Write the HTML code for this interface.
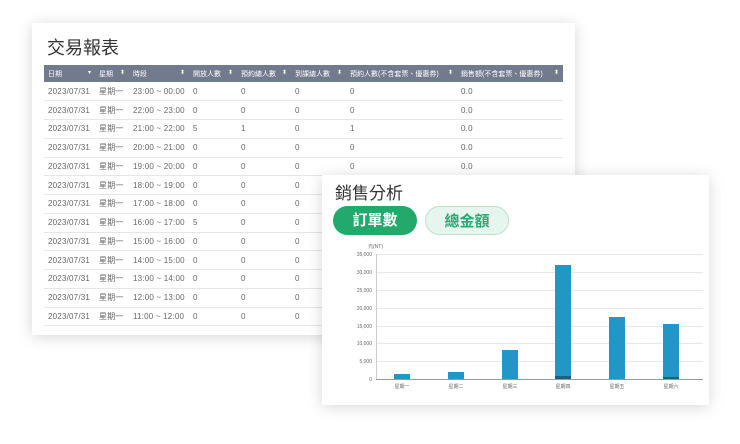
<!DOCTYPE html>
<html><head><meta charset="utf-8"><style>
*{margin:0;padding:0;box-sizing:border-box}
body{width:740px;height:444px;background:#fff;position:relative;overflow:hidden;font-family:"Liberation Sans","Noto Sans CJK TC",sans-serif}
.card{position:absolute;background:#fff;box-shadow:0 2px 14px rgba(0,0,0,.16)}
#t{left:32px;top:23px;width:543px;height:312px}
#t h1{position:absolute;left:15px;top:11px;font-size:18px;font-weight:normal;color:#333}
table{position:absolute;left:12px;top:42px;width:519px;border-collapse:collapse;font-size:8px;color:#666;letter-spacing:.2px}
th{background:#727a8e;color:#fff;font-weight:normal;height:17px;text-align:left;padding-left:4px;font-size:7px;white-space:nowrap;letter-spacing:0}
td{height:18.75px;border-bottom:1px solid #e6e6e6;padding-left:4px;white-space:nowrap}
.s{float:right;margin-right:4px;font-size:6px}
#c{left:322px;top:175px;width:387px;height:230px}
#c h2{position:absolute;left:13px;top:4px;font-size:17px;font-weight:normal;color:#333}
.b{position:absolute;top:31px;height:29px;width:84px;border-radius:15px;text-align:center;line-height:29px;font-size:15px;font-weight:bold}
.ax{position:absolute;font-size:5px;color:#666}
</style></head><body>
<div class="card" id="t"><h1>交易報表</h1>
<table>
<tr><th style="width:51px">日期<span class="s">▾</span></th><th style="width:34px">星期<span class="s">⬍</span></th><th style="width:60px">時段<span class="s">⬍</span></th><th style="width:48px">開放人數<span class="s">⬍</span></th><th style="width:54px">預約總人數<span class="s">⬍</span></th><th style="width:55px">到課總人數<span class="s">⬍</span></th><th style="width:111px">預約人數(不含套票、優惠券)<span class="s">⬍</span></th><th>銷售額(不含套票、優惠券)<span class="s">⬍</span></th></tr>
<tr><td>2023/07/31</td><td>星期一</td><td>23:00 ~ 00:00</td><td>0</td><td>0</td><td>0</td><td>0</td><td>0.0</td></tr>
<tr><td>2023/07/31</td><td>星期一</td><td>22:00 ~ 23:00</td><td>0</td><td>0</td><td>0</td><td>0</td><td>0.0</td></tr>
<tr><td>2023/07/31</td><td>星期一</td><td>21:00 ~ 22:00</td><td>5</td><td>1</td><td>0</td><td>1</td><td>0.0</td></tr>
<tr><td>2023/07/31</td><td>星期一</td><td>20:00 ~ 21:00</td><td>0</td><td>0</td><td>0</td><td>0</td><td>0.0</td></tr>
<tr><td>2023/07/31</td><td>星期一</td><td>19:00 ~ 20:00</td><td>0</td><td>0</td><td>0</td><td>0</td><td>0.0</td></tr>
<tr><td>2023/07/31</td><td>星期一</td><td>18:00 ~ 19:00</td><td>0</td><td>0</td><td>0</td><td>0</td><td>0.0</td></tr>
<tr><td>2023/07/31</td><td>星期一</td><td>17:00 ~ 18:00</td><td>0</td><td>0</td><td>0</td><td>0</td><td>0.0</td></tr>
<tr><td>2023/07/31</td><td>星期一</td><td>16:00 ~ 17:00</td><td>5</td><td>0</td><td>0</td><td>0</td><td>0.0</td></tr>
<tr><td>2023/07/31</td><td>星期一</td><td>15:00 ~ 16:00</td><td>0</td><td>0</td><td>0</td><td>0</td><td>0.0</td></tr>
<tr><td>2023/07/31</td><td>星期一</td><td>14:00 ~ 15:00</td><td>0</td><td>0</td><td>0</td><td>0</td><td>0.0</td></tr>
<tr><td>2023/07/31</td><td>星期一</td><td>13:00 ~ 14:00</td><td>0</td><td>0</td><td>0</td><td>0</td><td>0.0</td></tr>
<tr><td>2023/07/31</td><td>星期一</td><td>12:00 ~ 13:00</td><td>0</td><td>0</td><td>0</td><td>0</td><td>0.0</td></tr>
<tr><td>2023/07/31</td><td>星期一</td><td>11:00 ~ 12:00</td><td>0</td><td>0</td><td>0</td><td>0</td><td>0.0</td></tr>
</table></div>
<div class="card" id="c"><h2>銷售分析</h2>
<div class="b" style="left:11px;background:#22a96b;color:#fff">訂單數</div>
<div class="b" style="left:103px;background:#e6f6ee;border:1px solid #b8e2cc;color:#2aa872">總金額</div>
<div class="ax" style="left:46px;top:68px">元(NT)</div>
<svg style="position:absolute;left:0;top:0" width="387" height="230">
<g stroke="#e8e8e8" stroke-width="1">
<line x1="54" x2="381" y1="79.5" y2="79.5"/><line x1="54" x2="381" y1="97.5" y2="97.5"/><line x1="54" x2="381" y1="115.5" y2="115.5"/><line x1="54" x2="381" y1="133.5" y2="133.5"/><line x1="54" x2="381" y1="151.5" y2="151.5"/><line x1="54" x2="381" y1="168.5" y2="168.5"/><line x1="54" x2="381" y1="186.5" y2="186.5"/></g>
<line x1="54" x2="381" y1="204.5" y2="204.5" stroke="#999"/>
<line x1="54.5" x2="54.5" y1="79" y2="204" stroke="#ccc"/>
<g fill="#2196c7">
<rect x="72" y="199" width="16" height="5"/><rect x="126" y="197" width="16" height="7"/><rect x="180" y="175" width="16" height="29"/><rect x="233" y="90" width="16" height="114"/><rect x="287" y="142" width="16" height="62"/><rect x="341" y="149" width="16" height="55"/></g>
<g fill="#1a5f80"><rect x="233" y="201" width="16" height="3"/><rect x="341" y="202" width="16" height="2"/></g>
<g font-size="5" fill="#666" text-anchor="end" font-family="Liberation Sans">
<text x="50" y="81">35,000</text><text x="50" y="99">30,000</text><text x="50" y="117">25,000</text><text x="50" y="135">20,000</text><text x="50" y="153">15,000</text><text x="50" y="170">10,000</text><text x="50" y="188">5,000</text><text x="50" y="206">0</text></g>
<g font-size="5" fill="#666" text-anchor="middle" font-family="Liberation Sans,Noto Sans CJK TC">
<text x="80" y="213">星期一</text><text x="134" y="213">星期二</text><text x="188" y="213">星期三</text><text x="241" y="213">星期四</text><text x="295" y="213">星期五</text><text x="349" y="213">星期六</text></g>
</svg></div>
</body></html>
